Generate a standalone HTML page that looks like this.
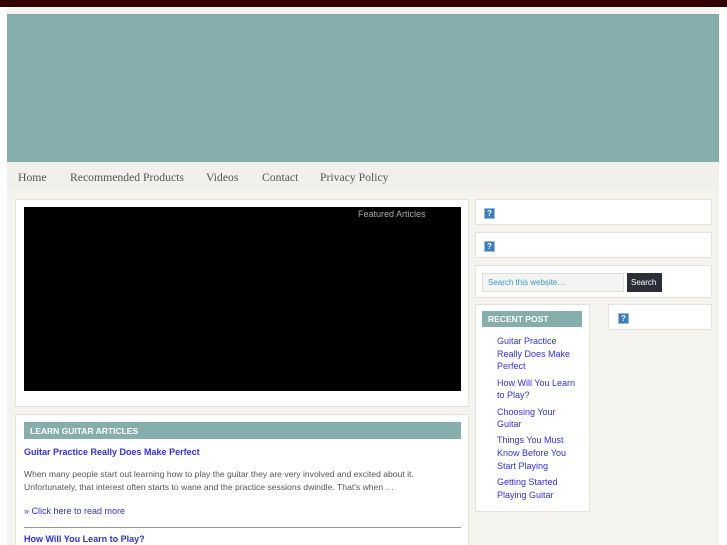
<!DOCTYPE html>
<html><head><meta charset="utf-8"><style>
*{margin:0;padding:0;box-sizing:border-box}
html{overflow:hidden;width:727px;height:545px}
body{width:727px;height:545px;overflow:hidden;background:#fff;font-family:"Liberation Sans",sans-serif;position:relative}
.a{position:absolute}
.box{position:absolute;background:#fff;border:1px solid #e3e2dc}
.q{position:absolute;width:11px;height:11px;background:#3a7cc4;border:1px solid #9bc;color:#fff;font-size:8px;font-weight:bold;text-align:center;line-height:9px}
.nav{font-family:"Liberation Serif",serif;font-size:11.7px;color:#555;top:171px}
.rp a{display:block;color:#2f2ff0;font-size:9px;line-height:12.7px;margin-bottom:3.5px;text-decoration:none}
</style></head><body>
<div class="a" style="left:0;top:0;width:727px;height:7px;background:#300005"></div>
<div class="a" style="left:7px;top:7px;width:712px;height:538px;background:#f4f3ee"></div>
<div class="a" style="left:7px;top:14px;width:712px;height:148px;background:#85aeac"></div>
<div class="a" style="left:7px;top:162px;width:712px;height:28px;background:#f1f0eb"></div>
<div class="a nav" style="left:18px">Home</div>
<div class="a nav" style="left:70px">Recommended Products</div>
<div class="a nav" style="left:206px">Videos</div>
<div class="a nav" style="left:262px">Contact</div>
<div class="a nav" style="left:320px">Privacy Policy</div>

<div class="box" style="left:15px;top:199px;width:454px;height:208px"></div>
<div class="a" style="left:24px;top:207px;width:437px;height:184px;background:#000"></div>
<div class="a" style="left:358px;top:209px;font-size:9px;color:#aaa">Featured Articles</div>

<div class="box" style="left:15px;top:414px;width:454px;height:131px;border-bottom:none"></div>
<div class="a" style="left:24px;top:422px;width:437px;height:17px;background:#85aeac;color:#fff;font-size:8.5px;font-weight:bold;padding:4px 0 0 6px">LEARN GUITAR ARTICLES</div>
<div class="a" style="left:24px;top:447px;font-size:9px;font-weight:bold;color:#2f2ff0">Guitar Practice Really Does Make Perfect</div>
<div class="a" style="left:24px;top:468px;width:440px;font-size:8.6px;line-height:13px;color:#555">When many people start out learning how to play the guitar they are very involved and excited about it. Unfortunately, that interest often starts to wane and the practice sessions dwindle. That's when …</div>
<div class="a" style="left:24px;top:506px;font-size:9px;color:#2f2ff0">» Click here to read more</div>
<div class="a" style="left:24px;top:527px;width:437px;height:1px;background:#999"></div>
<div class="a" style="left:24px;top:534px;font-size:9px;font-weight:bold;color:#2f2ff0">How Will You Learn to Play?</div>

<div class="box" style="left:475px;top:199px;width:237px;height:26px"></div><div class="q" style="left:484px;top:208px">?</div>
<div class="box" style="left:475px;top:232px;width:237px;height:26px"></div><div class="q" style="left:484px;top:241px">?</div>
<div class="box" style="left:475px;top:265px;width:237px;height:33px"></div>
<div class="a" style="left:482px;top:273px;width:142px;height:19px;background:#f4f4f2;border:1px solid #ddd;font-size:8px;color:#39c;padding:4px 0 0 5px">Search this website…</div>
<div class="a" style="left:627px;top:273px;width:35px;height:19px;background:#2a2e38;color:#fff;font-size:8px;padding:5px 0 0 4px">Search</div>
<div class="box" style="left:475px;top:304px;width:115px;height:208px"></div>
<div class="a" style="left:482px;top:311px;width:100px;height:16px;background:#85aeac;color:#fff;font-size:8.5px;font-weight:bold;padding:3px 0 0 6px">RECENT POST</div>
<div class="a rp" style="left:497px;top:335px;width:85px">
<a>Guitar Practice Really Does Make Perfect</a><a>How Will You Learn to Play?</a><a>Choosing Your Guitar</a><a>Things You Must Know Before You Start Playing</a><a>Getting Started Playing Guitar</a></div>
<div class="box" style="left:608px;top:304px;width:104px;height:26px"></div><div class="q" style="left:618px;top:313px">?</div>
</body></html>
